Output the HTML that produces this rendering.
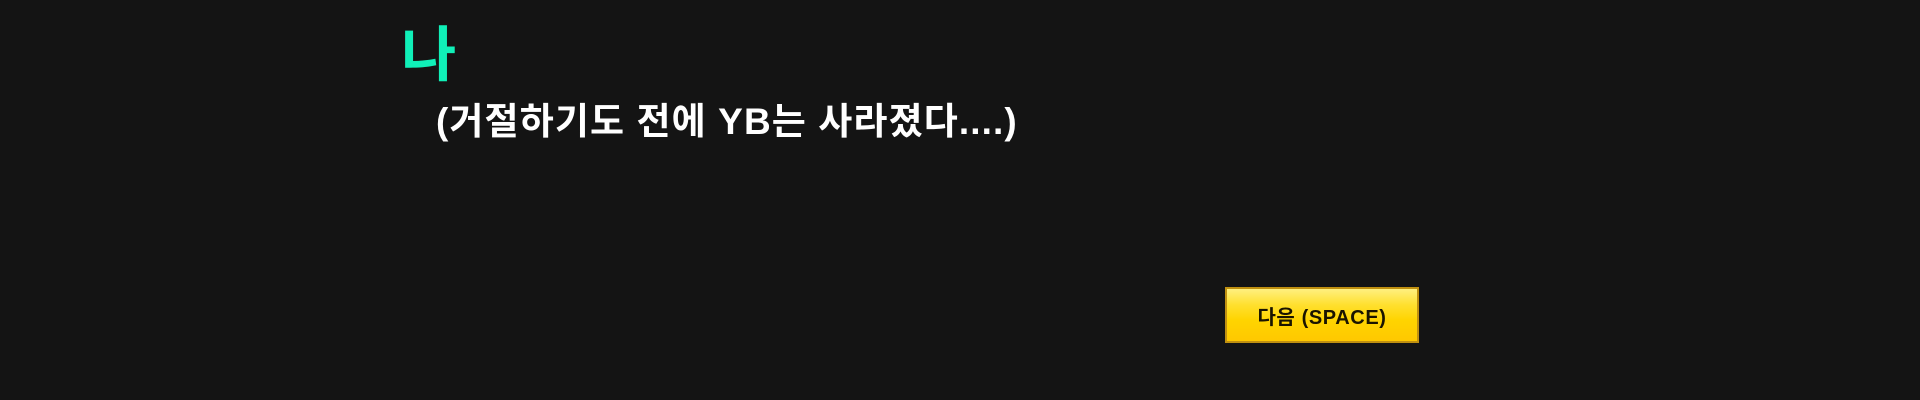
<!DOCTYPE html>
<html><head><meta charset="utf-8"><style>
html,body{margin:0;padding:0;width:1920px;height:400px;background:#141414;overflow:hidden;font-family:"Liberation Sans","Noto Sans CJK KR",sans-serif;}
.na{position:absolute;left:401px;top:26px;font-size:60px;color:#10f0b8;font-weight:bold;line-height:1;}
.sub{position:absolute;left:436px;top:100px;font-size:37px;color:#fff;font-weight:bold;line-height:1.2;white-space:nowrap;letter-spacing:1.1px;}
.btn{position:absolute;left:1225px;top:287px;width:194px;height:56px;box-sizing:border-box;border:2px solid #c09010;background:linear-gradient(#fff080 0%,#ffe030 30%,#ffd400 60%,#ffc800 100%);display:flex;align-items:center;justify-content:center;font-weight:bold;font-size:20px;color:#1a1400;letter-spacing:0.6px;}
</style></head><body>
<div class="na">나</div>
<div class="sub">(거절하기도 전에 YB는 사라졌다....)</div>
<div class="btn">다음 (SPACE)</div>
</body></html>
